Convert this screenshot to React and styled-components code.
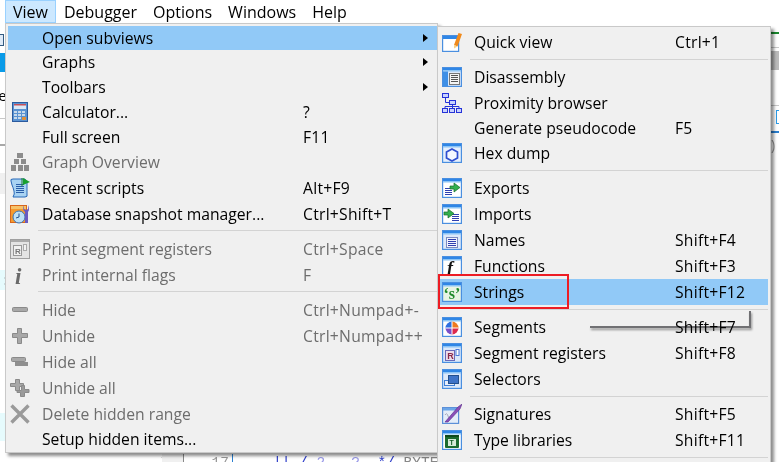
import styled, { createGlobalStyle } from "styled-components";

const Global = createGlobalStyle`
  html, body { margin: 0; padding: 0; background: #fff; }
  body { font-family: "Open Sans", "Liberation Sans", sans-serif; }
`;

const Page = styled.div`
  position: relative;
  width: 779px;
  height: 462px;
  overflow: hidden;
  background: #fff;
`;
const MenuBar = styled.div`
  display: flex;
  height: 23px;
  padding-left: 5px;
  font-size: 16px;
  line-height: 25px;
  color: #000;
`;
const BarItem = styled.div`
  padding: 0 8px;
  box-sizing: border-box;
  background: ${(p) => (p.$active ? "#cce8ff" : "transparent")};
  box-shadow: ${(p) => (p.$active ? "inset 0 0 0 1px #99d1ff" : "none")};
`;

// what can still be seen of the main window around the menus
const Backdrop = styled.div`
  display: flex;
  height: 439px;
  justify-content: space-between;
`;
const LeftStrip = styled.div`
  width: 5px;
  overflow: hidden;
  display: flex;
  flex-direction: column;
`;
const RightStrip = styled.div`
  width: 8px;
  overflow: hidden;
  display: flex;
  flex-direction: column;
`;
const Chunk = styled.div`
  flex: none;
  box-sizing: border-box;
  height: ${(p) => p.$h}px;
  margin-top: ${(p) => p.$top || 0}px;
  background: ${(p) => p.$bg || "transparent"};
`;
const ToolChip = styled.div`
  flex: none;
  box-sizing: border-box;
  width: 4px;
  height: 12px;
  margin-top: 11px;
  border: 1px solid #345a80;
  border-left: none;
  background: #dfeaf7;
`;
const Fragment = styled.div`
  flex: none;
  font-size: 14px;
  line-height: ${(p) => p.$h}px;
  height: ${(p) => p.$h}px;
  margin: ${(p) => p.$top || 0}px 0 0 ${(p) => p.$left || 0}px;
  color: ${(p) => p.$color || "#000"};
  background: ${(p) => p.$bg || "transparent"};
  white-space: pre;
`;
const FrameChip = styled.div`
  flex: none;
  box-sizing: border-box;
  width: 10px;
  height: 14px;
  margin-top: 4px;
  margin-left: 5px;
  border: 1px solid #2a9be8;
  background: #fff;
`;
const BottomStrip = styled.div`
  position: absolute;
  left: 0;
  right: 0;
  top: 454px;
  height: 8px;
  overflow: hidden;
  display: flex;
  font-family: "Liberation Mono", monospace;
  font-size: 14.5px;
  line-height: 19px;
  color: #222;
`;
const CodeDot = styled.div`
  width: 162px;
  padding-left: 143px;
  box-sizing: border-box;
  line-height: 15px;
  white-space: pre;
`;
const Gutter = styled.div`
  width: 21px;
  background: #f0f0f0;
  border-right: 1px solid #888;
`;
const LineNo = styled.div`
  width: 48px;
  text-align: right;
  padding-right: 3px;
  box-sizing: border-box;
  color: #999;
`;
const CodeText = styled.div`
  border-left: 1px solid #2a7fd0;
  padding-left: 40px;
  color: #2a3ac8;
  white-space: pre;
`;
const Token = styled.span`
  color: ${(p) => p.$color};
`;

const Menu = styled.div`
  position: absolute;
  left: ${(p) => p.$left}px;
  top: ${(p) => p.$top}px;
  width: ${(p) => p.$width}px;
  box-sizing: border-box;
  padding: ${(p) => p.$pad};
  background: #f0f0f0;
  border: 1px solid #c9c9c9;
  box-shadow: 3px 3px 3px rgba(0, 0, 0, 0.45);
  font-size: 15.7px;
  color: #000;
`;
const Row = styled.div`
  display: grid;
  grid-template-columns: 24px ${(p) => p.$label}px 1fr 14px;
  align-items: center;
  height: ${(p) => p.$h}px;
  background: ${(p) => (p.$hot ? "#91c9f7" : "transparent")};
  color: ${(p) => (p.$off ? "#6d6d6d" : "#000")};
  white-space: nowrap;
`;
const IconSlot = styled.div`
  width: 24px;
  height: 22px;
  display: flex;
  align-items: center;
  justify-content: center;
`;
const Label = styled.span`
  padding-left: 10px;
`;
const Shortcut = styled.span`
  letter-spacing: 0.25px;
`;
const Arrow = styled.i`
  display: block;
  width: 0;
  height: 0;
  border-left: 5px solid #000;
  border-top: 4px solid transparent;
  border-bottom: 4px solid transparent;
`;
const Sep = styled.div`
  height: 9px;
  margin-left: ${(p) => p.$indent}px;
  box-sizing: border-box;
  padding-top: ${(p) => p.$line}px;
  &::after {
    content: "";
    display: block;
    height: 1px;
    background: #d3d3d3;
  }
`;
// red box drawn over the screenshot around the Strings row
const RedBox = styled.div`
  position: absolute;
  left: 438px;
  top: 274px;
  width: 131px;
  height: 35px;
  box-sizing: border-box;
  border: 2px solid #ed1c24;
`;
// stray arrow left on the screenshot
const StrayLine = styled.div`
  position: absolute;
  left: 590px;
  top: 311px;
  width: 161px;
  height: 17px;
  box-sizing: border-box;
  border-right: 2px solid #77777a;
  border-bottom: 2px solid #77777a;
  filter: drop-shadow(1px 2px 1px rgba(0, 0, 0, 0.4));
  mix-blend-mode: multiply;
`;

const Ico = ({ children, w = 20, h = 20 }) => (
  <svg width={w} height={h} viewBox={`0 0 ${w} ${h}`}>
    {children}
  </svg>
);

// the blue framed little window most of the IDA icons are built on
const Win = ({ children, fill = "#fff" }) => (
  <Ico>
    <rect x="0.6" y="0.6" width="18.8" height="18.8" fill={fill} stroke="#4a8fe0" strokeWidth="1.2" />
    <rect x="1" y="1" width="18" height="2" fill="#2f86e6" />
    <rect x="1" y="3" width="18" height="1.5" fill="#8cc4f5" />
    {children}
  </Ico>
);

const lines = (x, y, w, n, color = "#3a4aa8", step = 2) =>
  Array.from({ length: n }, (_, i) => (
    <rect key={i} x={x} y={y + i * step} width={w} height="1" fill={color} />
  ));

const Tree = ({ color, fill }) => (
  <Ico>
    <g fill={fill} stroke={color}>
      <rect x="0.5" y="0.5" width="6" height="4" />
      <rect x="7.5" y="7.5" width="6" height="4" />
      <rect x="0.5" y="15.5" width="5" height="4" />
      <rect x="7.5" y="15.5" width="5" height="4" />
      <rect x="14.5" y="15.5" width="5" height="4" />
    </g>
    <path d="M3.5 4.5V9.5H7.5M10.5 11.5V15.5M3 15.5V13.5H17V15.5" fill="none" stroke={color} />
  </Ico>
);

const icons = {
  calc: (
    <Ico w={16} h={20}>
      <rect x="0.5" y="0.5" width="15" height="19" fill="#5a93d2" stroke="#2b5a9e" />
      <rect x="2" y="2" width="12" height="5" fill="#dbe8f6" />
      <rect x="2" y="2" width="12" height="1.5" fill="#c4505a" />
      <g fill="#c9d9ea">
        {[9, 12, 15].map((y) =>
          [2, 6, 10].map((x) => <rect key={x + "-" + y} x={x} y={y} width="3" height="2" />)
        )}
      </g>
      <rect x="10" y="15" width="4" height="3" fill="#e0913c" />
    </Ico>
  ),
  overview: (
    <Ico>
      <g fill="#8c8c8c">
        <rect x="7" y="1" width="6" height="5" />
        <rect x="4" y="7" width="5" height="5" />
        <rect x="11" y="7" width="5" height="5" />
        <rect x="1" y="13" width="5" height="6" />
        <rect x="8" y="13" width="5" height="6" />
        <rect x="14" y="13" width="5" height="6" />
      </g>
    </Ico>
  ),
  scripts: (
    <Ico>
      <path d="M1 3Q0 1 3 1H15L17 5V16Q18 19 15 19H3Q5 16 4 13Q3 9 2 7Z" fill="#a9d3f3" stroke="#2768b8" />
      {lines(6, 6, 8, 5, "#2a5ea8")}
      <path d="M12 0V8" stroke="#1c7d2c" />
      <path d="M13 0L20 4L13 7Z" fill="#19a02e" />
    </Ico>
  ),
  snapshot: (
    <Ico>
      <rect x="0.5" y="1.5" width="16" height="17" fill="#f59a2e" stroke="#d9661a" />
      <rect x="1" y="2" width="15" height="3" fill="#f6c26a" />
      <circle cx="9" cy="13" r="6" fill="#bfe0f5" stroke="#3a74b8" />
      <path d="M9 9.5V13L6 14" stroke="#24508c" fill="none" />
      <path d="M14 1V5L16 6L18 5V1Q20 6 18 8V19H15V8Q12 6 14 1Z" fill="#6a5ac0" />
    </Ico>
  ),
  printSeg: (
    <Ico>
      <rect x="0.5" y="0.5" width="19" height="19" fill="#e4e4e4" stroke="#a0a0a0" />
      <rect x="1" y="1" width="18" height="2" fill="#ababab" />
      <rect x="3.5" y="6.5" width="8" height="10" fill="#f2f2f2" stroke="#999" />
      <text x="5" y="15" fontSize="8" fontWeight="700" fontFamily="Liberation Sans" fill="#777">R</text>
      <rect x="13.5" y="5.5" width="3" height="6" fill="#f2f2f2" stroke="#aaa" />
    </Ico>
  ),
  flags: (
    <Ico>
      <text x="5" y="19" fontSize="23" fontWeight="700" fontStyle="italic" fontFamily="Liberation Serif" fill="#6a6a6a">i</text>
    </Ico>
  ),
  hide: (
    <Ico>
      <rect x="2.5" y="7.5" width="15" height="4" rx="1" fill="#a8a8a8" stroke="#8a8a8a" />
    </Ico>
  ),
  unhide: (
    <Ico>
      <path d="M7.5 2.5H11.5V7.5H17.5V11.5H11.5V17.5H7.5V11.5H2.5V7.5H7.5Z" fill="#a8a8a8" stroke="#8a8a8a" />
    </Ico>
  ),
  hideAll: (
    <Ico>
      <rect x="1.5" y="5.5" width="14" height="4" rx="1" fill="#a8a8a8" stroke="#8a8a8a" />
      <rect x="5" y="10" width="13" height="4" fill="#8f8f8f" />
    </Ico>
  ),
  unhideAll: (
    <Ico>
      <path d="M5.5 1.5H9.5V5.5H13.5V8.5H9.5V12.5H5.5V8.5H0.5V5.5H5.5Z" fill="#a8a8a8" stroke="#8a8a8a" />
      <path d="M11.5 7.5H14.5V11.5H19V14.5H14.5V18.5H10.5V14.5H7V12.5H11.5Z" fill="#9a9a9a" stroke="#8a8a8a" />
    </Ico>
  ),
  del: (
    <Ico>
      <path d="M1.5 1.5L18.5 18.5M18.5 1.5L1.5 18.5" stroke="#9a9a9a" strokeWidth="3.4" />
    </Ico>
  ),
  quick: (
    <Ico>
      <rect x="0.6" y="3.6" width="16" height="15.8" fill="#fff" stroke="#4a8fe0" strokeWidth="1.2" />
      <rect x="1" y="4" width="15" height="3" fill="#2f86e6" />
      <path d="M12 13L16.5 1L20 2L15.5 14.5Z" fill="#f08a1c" />
      <path d="M12 13L15.5 14.5L12 16.5Z" fill="#f6d28a" />
    </Ico>
  ),
  disasm: (
    <Win fill="#dce9fa">
      <rect x="1" y="4.5" width="5" height="14.5" fill="#3e8fe6" />
      <rect x="7.5" y="6.5" width="10" height="11" fill="#f4f4f4" stroke="#777" />
      {lines(9, 8, 7, 4, "#555")}
    </Win>
  ),
  proximity: <Tree color="#2533d8" fill="#c9d2ff" />,
  hex: (
    <Win fill="#e6f0fd">
      <path d="M10 6L15.5 9V15L10 18L4.5 15V9Z" fill="#f4f8ff" stroke="#2f4fd0" strokeWidth="1.7" />
    </Win>
  ),
  exports: (
    <Win>
      {lines(3, 10, 7, 4, "#2f3fb0")}
      <path d="M8 8H12V5L18 9.5L12 14V11H8Z" fill="#33b04e" stroke="#176b2c" strokeWidth="0.7" />
    </Win>
  ),
  imports: (
    <Win>
      {lines(10, 10, 7, 4, "#2f3fb0")}
      <path d="M2 8H6V5L12 9.5L6 14V11H2Z" fill="#33b04e" stroke="#176b2c" strokeWidth="0.7" />
    </Win>
  ),
  names: (
    <Win fill="#dce9fa">
      <rect x="4.5" y="7.5" width="11" height="10" fill="#f2f5fd" stroke="#7b8ac0" />
      {lines(6, 9, 8, 4, "#2f3fb0")}
    </Win>
  ),
  functions: (
    <Win>
      <text x="5" y="18" fontSize="18" fontStyle="italic" fontWeight="700" fontFamily="Liberation Serif" fill="#111">f</text>
    </Win>
  ),
  strings: (
    <Win fill="#e8f4e4">
      <text x="1.5" y="17" fontSize="16" fontWeight="700" fontFamily="Liberation Serif" fill="#1f8a2c">‘s’</text>
    </Win>
  ),
  segments: (
    <Win>
      <path d="M10 11V4.5A6.5 6.5 0 0 1 16.5 11Z" fill="#ee7a22" />
      <path d="M10 11H16.5A6.5 6.5 0 0 1 10 17.5Z" fill="#dc2a4e" />
      <path d="M10 11V17.5A6.5 6.5 0 0 1 3.5 11Z" fill="#7a4fc8" />
      <path d="M10 11H3.5A6.5 6.5 0 0 1 10 4.5Z" fill="#2e6fe0" />
      <path d="M10 4.5V17.5M3.5 11H16.5" stroke="#fff" />
    </Win>
  ),
  segreg: (
    <Win fill="#dce9fa">
      <rect x="3.5" y="7.5" width="9" height="10" fill="#ecdcea" stroke="#6a6ab8" />
      <text x="5.2" y="16" fontSize="9" fontWeight="700" fontFamily="Liberation Sans" fill="#8a2a4a">R</text>
      <rect x="14" y="6.5" width="3" height="6" fill="#fff" stroke="#4a7ad8" />
    </Win>
  ),
  selectors: (
    <Win fill="#dce9fa">
      <rect x="2.5" y="11.5" width="10" height="5" fill="#e7eefb" stroke="#3f7fd6" />
      <rect x="6.5" y="6.5" width="10" height="8" fill="#3f74c8" stroke="#24508c" />
    </Win>
  ),
  signatures: (
    <Ico>
      <rect x="0.6" y="3.6" width="16" height="15.8" fill="#e4edf9" stroke="#5c90d8" strokeWidth="1.2" />
      <rect x="1" y="4" width="15" height="2.5" fill="#6aa5e8" />
      <path d="M3 11Q5 8 6 12T10 11" stroke="#a8a8bc" fill="none" />
      <path d="M3 18L16 3L20 0L18 5L6 18Z" fill="#8a4fb8" stroke="#5a2a8a" strokeWidth="0.6" />
    </Ico>
  ),
  typelibs: (
    <Win>
      <rect x="3" y="5" width="14" height="13" rx="1" fill="#1c6b30" />
      <rect x="3" y="5" width="14" height="2" fill="#0f4a1e" />
      <rect x="6" y="9" width="8" height="7" fill="#d7ead9" />
      <text x="7.4" y="15" fontSize="7" fontWeight="700" fontFamily="Liberation Sans" fill="#145a26">T</text>
    </Win>
  ),
};

const viewMenu = [
  { h: 24, text: "Open subviews", arrow: true, hot: true },
  { h: 24, text: "Graphs", arrow: true },
  { h: 25, text: "Toolbars", arrow: true },
  { h: 26, text: "Calculator...", icon: "calc", key: "?" },
  { h: 24, text: "Full screen", key: "F11" },
  { h: 26, text: "Graph Overview", icon: "overview", off: true },
  { h: 26, text: "Recent scripts", icon: "scripts", key: "Alt+F9" },
  { h: 26, text: "Database snapshot manager...", icon: "snapshot", key: "Ctrl+Shift+T" },
  { sep: true },
  { h: 26, text: "Print segment registers", icon: "printSeg", key: "Ctrl+Space", off: true },
  { h: 26, text: "Print internal flags", icon: "flags", key: "F", off: true },
  { sep: true },
  { h: 26, text: "Hide", icon: "hide", key: "Ctrl+Numpad+-", off: true },
  { h: 26, text: "Unhide", icon: "unhide", key: "Ctrl+Numpad++", off: true },
  { h: 26, text: "Hide all", icon: "hideAll", off: true },
  { h: 26, text: "Unhide all", icon: "unhideAll", off: true },
  { h: 26, text: "Delete hidden range", icon: "del", off: true },
  { h: 23, text: "Setup hidden items..." },
];

const subMenu = [
  { h: 26, text: "Quick view", icon: "quick", key: "Ctrl+1" },
  { sep: true },
  { h: 26, text: "Disassembly", icon: "disasm" },
  { h: 26, text: "Proximity browser", icon: "proximity" },
  { h: 24, text: "Generate pseudocode", key: "F5" },
  { h: 26, text: "Hex dump", icon: "hex" },
  { sep: true },
  { h: 26, text: "Exports", icon: "exports" },
  { h: 26, text: "Imports", icon: "imports" },
  { h: 26, text: "Names", icon: "names", key: "Shift+F4" },
  { h: 26, text: "Functions", icon: "functions", key: "Shift+F3" },
  { h: 26, text: "Strings", icon: "strings", key: "Shift+F12", hot: true },
  { sep: true },
  { h: 26, text: "Segments", icon: "segments", key: "Shift+F7" },
  { h: 26, text: "Segment registers", icon: "segreg", key: "Shift+F8" },
  { h: 26, text: "Selectors", icon: "selectors" },
  { sep: true },
  { h: 26, text: "Signatures", icon: "signatures", key: "Shift+F5" },
  { h: 26, text: "Type libraries", icon: "typelibs", key: "Shift+F11" },
  { sep: true },
];

const MenuRows = ({ items, label, indent, line }) =>
  items.map((it, i) =>
    it.sep ? (
      <Sep key={i} $indent={indent} $line={line} />
    ) : (
      <Row key={i} $h={it.h} $label={label} $hot={it.hot} $off={it.off}>
        <IconSlot>{it.icon && icons[it.icon]}</IconSlot>
        <Label>{it.text}</Label>
        <Shortcut>{it.key}</Shortcut>
        {it.arrow ? <Arrow /> : <span />}
      </Row>
    )
  );

export default function App() {
  return (
    <Page>
      <Global />
      <MenuBar>
        <BarItem $active>View</BarItem>
        <BarItem>Debugger</BarItem>
        <BarItem>Options</BarItem>
        <BarItem>Windows</BarItem>
        <BarItem>Help</BarItem>
      </MenuBar>
      <Backdrop>
        <LeftStrip>
          <ToolChip />
          <Chunk $h={19} $top={7} $bg="#0a9be8" />
          <Fragment $h={17} $top={15} $left={-5}>
            le
          </Fragment>
          <Chunk $h={1} $top={14} $bg="#c8c8c8" />
          <Chunk $h={2} $top={25} $bg="#a8a8a8" />
          <Chunk $h={21} $top={27} $bg="#f0f0f0" />
          <Fragment $h={20} $top={76} $bg="#e6fbfd">
            {" :"}
          </Fragment>
          <Chunk $h={28} $top={123} $bg="#e6fbfd" />
        </LeftStrip>
        <RightStrip>
          <Chunk $h={2} $top={9} $bg="#1a8a2e" />
          <Chunk $h={1} $top={13} $bg="#c8c8c8" />
          <Chunk $h={19} $top={3} $bg="#bbbbbb" />
          <Chunk $h={1} $top={35} $bg="#c8c8c8" />
          <FrameChip />
          <Chunk $h={2} $top={7} $bg="#2a7fd0" />
          <Fragment $h={18} $top={3} $color="#999">
            )
          </Fragment>
        </RightStrip>
      </Backdrop>
      <BottomStrip>
        <CodeDot>. t</CodeDot>
        <Gutter />
        <LineNo>17</LineNo>
        <CodeText>
          {"|| / "}
          <Token $color="#9a9ae8">2</Token>
          {"   "}
          <Token $color="#9a9ae8">?</Token>
          {"  */ "}
          <Token $color="#888">BYTE</Token>
        </CodeText>
      </BottomStrip>
      <Menu $left={5} $top={23} $width={433} $pad="2px 0 2px 2px">
        <MenuRows items={viewMenu} label={271} indent={30} line={3} />
      </Menu>
      <Menu $left={437} $top={26} $width={334} $pad="2px 2px 0 2px">
        <MenuRows items={subMenu} label={211} indent={30} line={4} />
      </Menu>
      <StrayLine />
      <RedBox />
    </Page>
  );
}
